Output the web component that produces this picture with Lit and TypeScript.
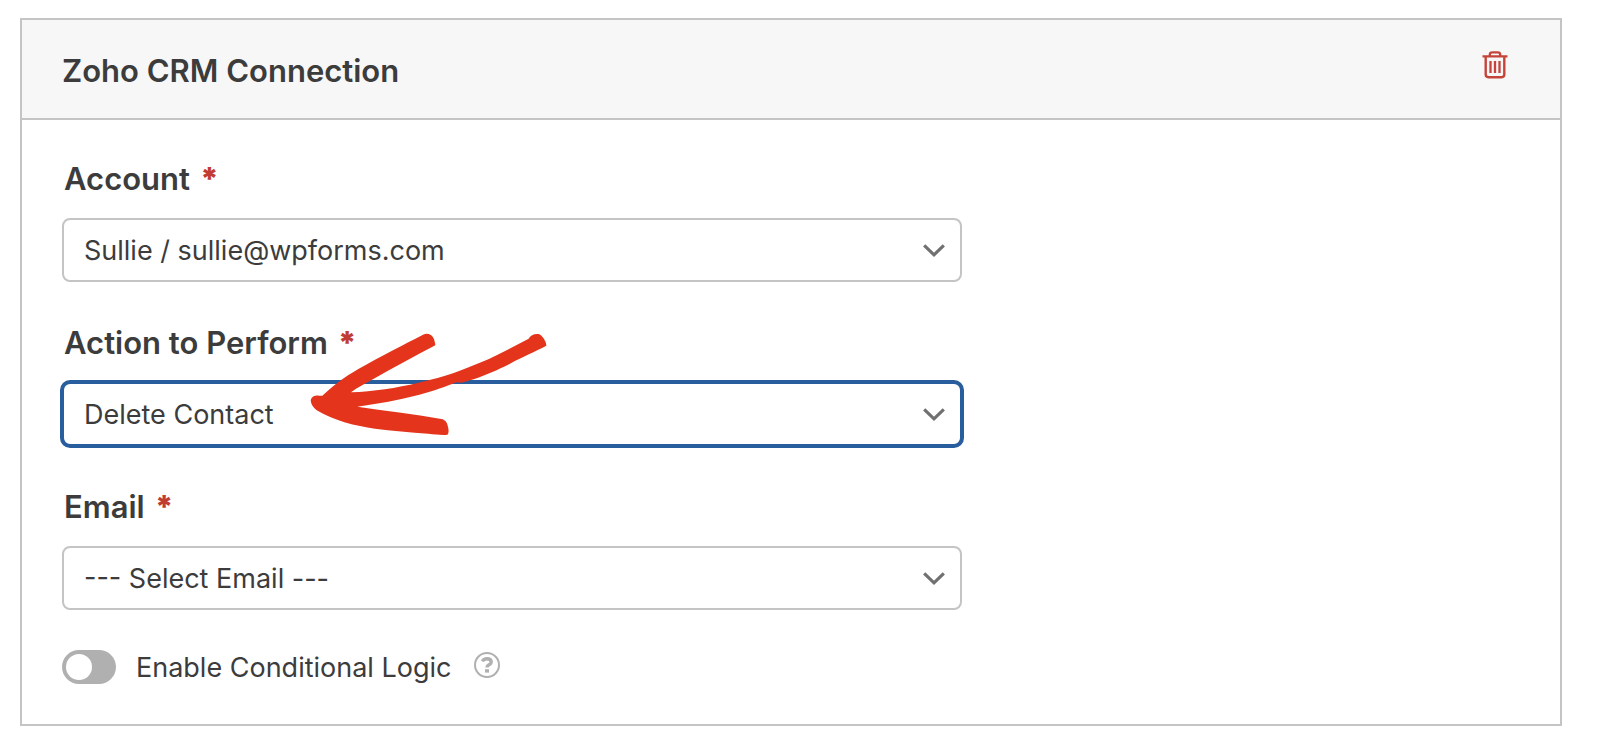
import { LitElement, html, css } from "lit";
import { customElement, property, state } from "lit/decorators.js";

@customElement("select-field")
class SelectField extends LitElement {
  @property() label = "";
  @property({ type: Array }) options: string[] = [];
  @property({ type: Boolean }) active = false;

  static styles = css`
    :host { display: block; }
    .label {
      display: flex;
      align-items: center;
      gap: 10px;
      height: 38px;
      padding-left: 2px;
      margin-bottom: 20px;
      font-size: 31px;
      font-weight: 600;
      line-height: 38px;
    }
    .required {
      color: #c13c32;
      font-size: 31px;
      font-weight: 900;
      line-height: 36px;
    }
    .control { position: relative; display: grid; align-items: center; }
    .select, .chevron { grid-area: 1 / 1; }
    .select {
      appearance: none;
      box-sizing: border-box;
      width: 100%;
      height: 64px;
      margin: 0;
      padding: 0 60px 0 20px;
      border: 2px solid #c4c4c4;
      border-radius: 8px;
      background: #fff;
      color: #3c3c3c;
      font: inherit;
      outline: none;
    }
    .select.active { border-color: #285d9e; box-shadow: 0 0 0 2px #285d9e; }
    .chevron {
      justify-self: end;
      width: 24px;
      height: 16px;
      margin-right: 16px;
      pointer-events: none;
      fill: none;
      stroke: #707070;
      stroke-width: 3.2;
    }
  `;

  render() {
    return html`
      <label class="label" for="select">
        <span>${this.label}</span><span class="required">*</span>
      </label>
      <div class="control">
        <select id="select" class="select ${this.active ? "active" : ""}" required>
          ${this.options.map((o) => html`<option>${o}</option>`)}
        </select>
        <svg class="chevron" viewBox="0 0 24 16" aria-hidden="true">
          <path d="M2.2 3.3L12 12.8L21.8 3.3" />
        </svg>
        <slot></slot>
      </div>
    `;
  }
}

@customElement("app-root")
class AppRoot extends LitElement {
  @state() private conditional = false;

  static styles = css`
    :host {
      display: block;
      background: #fff;
      color: #3c3c3c;
      font-family: Inter, "Noto Sans", sans-serif;
      font-size: 27px;
    }
    .page { padding: 18px 38px 8px 20px; }
    .card { border: 2px solid #c4c4c4; }
    .header {
      display: flex;
      justify-content: space-between;
      align-items: flex-start;
      box-sizing: border-box;
      height: 100px;
      padding: 30px 51px 0 40px;
      border-bottom: 2px solid #c4c4c4;
      background: #f7f7f7;
    }
    .title { margin: 0; font-size: 31px; font-weight: 600; line-height: 42px; }
    .delete {
      display: block;
      margin: 0;
      padding: 0;
      border: 0;
      background: none;
      cursor: pointer;
    }
    .trash { display: block; width: 28px; height: 30px; fill: none; stroke: #c5443a; }
    .body {
      display: flex;
      flex-direction: column;
      gap: 42px;
      padding: 40px 40px 39px;
    }
    .field { width: 100%; max-width: 900px; }
    .toggle-row { display: flex; align-items: center; height: 36px; margin-top: -3px; }
    .toggle {
      appearance: none;
      box-sizing: border-box;
      flex: none;
      display: flex;
      width: 54px;
      height: 34px;
      margin: 0 20px 0 0;
      padding: 4px;
      border-radius: 17px;
      background: #b0b0b0;
    }
    .toggle::before {
      content: "";
      width: 26px;
      height: 26px;
      border-radius: 50%;
      background: #fff;
    }
    .toggle:checked { justify-content: flex-end; background: #285d9e; }
    .toggle-label { line-height: 36px; padding-top: 2px; }
    .help {
      display: block;
      margin: 0 0 4px 22px;
      padding: 0;
      border: 0;
      background: none;
    }
    .help-icon { display: block; width: 28px; height: 28px; fill: none; stroke: #b0b0b0; }
    .help-dot { fill: #b0b0b0; stroke: none; }
    .arrow {
      position: absolute;
      left: 228px;
      top: -62px;
      width: 280px;
      height: 130px;
      fill: #e4351c;
      pointer-events: none;
    }
  `;

  render() {
    return html`
      <main class="page">
        <section class="card">
          <header class="header">
            <h2 class="title">Zoho CRM Connection</h2>
            <button class="delete" type="button" aria-label="Delete connection">
              <svg class="trash" viewBox="0 0 28 30" aria-hidden="true">
                <path stroke-width="2.3" d="M1.5 6.4H26.5M8.8 6V4.6Q8.8 2.3 11.4 2.3H16.6Q19.2 2.3 19.2 4.6V6" />
                <path stroke-width="2.4" d="M4.7 7V24.6Q4.7 27.2 7.3 27.2H20.7Q23.3 27.2 23.3 24.6V7" />
                <path stroke-width="2.3" d="M9.5 11V23M14 11V23M18.5 11V23" />
              </svg>
            </button>
          </header>
          <div class="body">
            <select-field class="field" label="Account" .options=${["Sullie / sullie@wpforms.com"]}></select-field>
            <select-field class="field" label="Action to Perform" active .options=${["Delete Contact"]}>
              <svg class="arrow" viewBox="0 0 840 390" aria-hidden="true">
                <path
                  d="M97 227C125 203 145 182 205 147C270 110 345 72 399 44C412 38 423 43 429 52C434 60 435 69 436 76C370 111 310 143 250 177C223 192 203 202 183 217C250 214 320 204 385 188C470 170 520 149 575 126C625 105 673 78 716 56C721 46 735 40 748 43C758 48 769 65 769 77C735 95 700 109 660 131C620 151 590 164 553 177L530 184L515 188L500 187C470 198 430 214 388 224C325 240 265 251 202 260C285 273 370 281 454 297C466 299 472 308 474 321C477 332 476 341 472 344C455 346 435 343 415 341C360 337 305 332 255 326C195 318 135 303 80 271C69 263 62 251 62 240C65 229 76 225 87 227Z"
                />
              </svg>
            </select-field>
            <select-field class="field" label="Email" .options=${["--- Select Email ---"]}></select-field>
            <div class="toggle-row">
              <input
                id="logic"
                class="toggle"
                type="checkbox"
                role="switch"
                .checked=${this.conditional}
                @change=${(e: Event) => (this.conditional = (e.target as HTMLInputElement).checked)}
              />
              <label class="toggle-label" for="logic">Enable Conditional Logic</label>
              <button class="help" type="button" aria-label="Help">
                <svg class="help-icon" viewBox="0 0 28 28" aria-hidden="true">
                  <circle cx="14" cy="14" r="12" stroke-width="2" />
                  <path stroke-width="3.4" d="M9.4 10.4Q10.6 7.8 14 7.8Q18.2 7.8 18.2 11Q18.2 12.7 15.6 14Q14 14.8 14 16.6" />
                  <rect class="help-dot" x="12" y="18.2" width="4" height="3.4" />
                </svg>
              </button>
            </div>
          </div>
        </section>
      </main>
    `;
  }
}
